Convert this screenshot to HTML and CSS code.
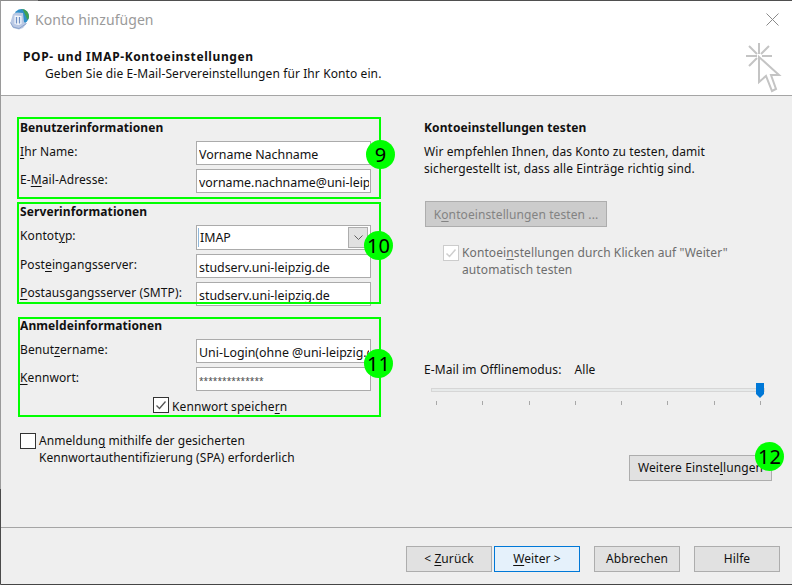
FILE: index.html
```html
<!DOCTYPE html>
<html lang="de">
<head>
<meta charset="utf-8">
<title>Konto hinzufügen</title>
<link rel="stylesheet" href="styles.css">
</head>
<body>
<div class="window">
  <header class="head">
    <div class="titlebar">
      <svg class="app-icon" width="20" height="22" viewBox="0 0 20 22">
        <circle cx="11.500" cy="8.500" r="7.500" fill="#2f8fc9"/>
        <path d="M11 1a7.500 7.500 0 0 1 8 7.500c0 1.500-.5 2.500-1.500 3.500L13 2z" fill="#3fa052"/>
        <path d="M.5 14.500L3 6l4-1.500L13 5l1 9 2.500 1.500L13 20l-4 1.500L3 20z" fill="#b9c8e4"/>
        <path d="M4.500 7.500l7 .5v8l-3 1-4-1z" fill="#f4f7fc"/>
        <path d="M6.500 9v6.500M9.500 9v6.500" stroke="#6f8fc4" stroke-width="1.300"/>
        <path d="M.5 14.500L3 19l6 1.500 7.500-5" fill="none" stroke="#8ba4cc"/>
      </svg>
      <span class="title">Konto hinzufügen</span>
      <svg class="close" width="13" height="13" viewBox="0 0 13 13">
        <path d="M.5.5l12 12M12.500.5l-12 12" stroke="#8a8a8a" fill="none"/>
      </svg>
    </div>
    <div class="head-body">
      <div class="head-text">
        <h1 class="head-title">POP- und IMAP-Kontoeinstellungen</h1>
        <p class="head-sub">Geben Sie die E-Mail-Servereinstellungen für Ihr Konto ein.</p>
      </div>
      <svg class="click-icon" width="38" height="52" viewBox="0 0 38 52">
        <g stroke="#c4c4c4" stroke-width="2" fill="none">
          <path d="M15 1v11M2 14h11M18 14h10M5 4l8 8M25 4l-8 8M5 24l8-8"/>
          <path d="M15 15V40l7-6 6 15 4-2-5-14h8z" fill="#fff"/>
        </g>
      </svg>
    </div>
  </header>

  <main class="main">
    <section class="col-left">
      <div class="group">
        <h2 class="heading">Benutzerinformationen</h2>
        <div class="rows">
          <label class="lbl"><u>I</u>hr Name:</label>
          <input class="field" value="Vorname Nachname">
          <label class="lbl">E-<u>M</u>ail-Adresse:</label>
          <input class="field" value="vorname.nachname@uni-leipzig.de">
        </div>
      </div>
      <div class="group group-server">
        <h2 class="heading">Serverinformationen</h2>
        <div class="rows">
          <label class="lbl">Kontot<u>y</u>p:</label>
          <div class="combo">
            <span class="combo-text">IMAP</span>
            <span class="combo-btn">
              <svg width="9" height="6" viewBox="0 0 9 6"><path d="M.5.500l4 4 4-4" fill="none" stroke="#606060"/></svg>
            </span>
          </div>
          <label class="lbl">Post<u>e</u>ingangsserver:</label>
          <input class="field" value="studserv.uni-leipzig.de">
          <label class="lbl"><u>P</u>ostausgangsserver (SMTP):</label>
          <input class="field" value="studserv.uni-leipzig.de">
        </div>
      </div>
      <div class="group group-login">
        <h2 class="heading">Anmeldeinformationen</h2>
        <div class="rows">
          <label class="lbl">Benut<u>z</u>ername:</label>
          <input class="field" value="Uni-Login(ohne @uni-leipzig.de)">
          <label class="lbl"><u>K</u>ennwort:</label>
          <input class="field field-pass" value="**************">
        </div>
      </div>
      <div class="check-row check-save">
        <span class="box"><svg width="14" height="14" viewBox="0 0 14 14"><path d="M2.500 7.500l3 3 6-7" fill="none" stroke="#555" stroke-width="1.300"/></svg></span>
        <span class="check-text">Kennwort speiche<u>r</u>n</span>
      </div>
      <div class="check-row check-spa">
        <span class="box"></span>
        <span class="check-text">Anmeldun<u>g</u> mithilfe der gesicherten<br>Kennwortauthentifizierung (SPA) erforderlich</span>
      </div>
    </section>

    <section class="col-right">
      <h2 class="heading">Kontoeinstellungen testen</h2>
      <p class="para">Wir empfehlen Ihnen, das Konto zu testen, damit<br>sichergestellt ist, dass alle Einträge richtig sind.</p>
      <button class="btn btn-test" type="button">K<u>o</u>ntoeinstellungen testen ...</button>
      <div class="check-row check-auto">
        <span class="box box-off"><svg width="14" height="14" viewBox="0 0 14 14"><path d="M2.500 7.500l3 3 6-7" fill="none" stroke="#cfcfcf" stroke-width="1.500"/></svg></span>
        <span>Kontoei<u>n</u>stellungen durch Klicken auf "Weiter"<br>automatisch testen</span>
      </div>
      <div class="offline">
        <span>E-Mail im Offlinemodus:</span>
        <span>Alle</span>
      </div>
      <div class="slider">
        <div class="track"></div>
        <div class="ticks"><i></i><i></i><i></i><i></i><i></i><i></i><i></i><i></i></div>
        <svg class="thumb" width="8" height="15" viewBox="0 0 8 15"><path d="M0 0h8v11l-4 4-4-4z" fill="#0078d7"/></svg>
      </div>
      <button class="btn btn-more" type="button">Weitere Einste<u>l</u>lungen</button>
    </section>
  </main>

  <footer class="foot">
    <button class="btn btn-foot" type="button">&lt; <u>Z</u>urück</button>
    <button class="btn btn-foot btn-primary" type="button"><u>W</u>eiter &gt;</button>
    <button class="btn btn-foot btn-gap" type="button">Abbrechen</button>
    <button class="btn btn-foot btn-gap" type="button">Hilfe</button>
  </footer>

  <div class="note note-1"></div>
  <div class="note note-2"></div>
  <div class="note note-3"></div>
  <div class="badge badge-9">9</div>
  <div class="badge badge-10">10</div>
  <div class="badge badge-11">11</div>
  <div class="badge badge-12">12</div>
</div>
</body>
</html>
```

FILE: styles.css
```css
* { box-sizing: border-box; }
html, body { margin: 0; padding: 0; background: #fff; overflow: hidden; }
body { font-family: "Noto Sans", "Open Sans", sans-serif; font-size: 12px; letter-spacing: 0.1px; color: #111; }
h1, h2, p { margin: 0; font-size: inherit; }
u { text-underline-offset: 2px; }

.window {
  position: relative;
  width: 792px;
  height: 585px;
  display: flex;
  flex-direction: column;
  border-left: 1px solid #9a9a9a;
  border-bottom: 1px solid #454545;
  border-top: 1px solid #8a8a8a;
}
.window::before { content: ""; position: absolute; left: -1px; top: 488px; bottom: 0; width: 1px; background: #4a4a4a; }
.window::after { content: ""; position: absolute; left: 37px; right: 0; top: -1px; height: 1px; background: #4f4f4f; }

.head { height: 95px; background: #fff; border-bottom: 1px solid #a5a5a5; display: flex; flex-direction: column; flex: none; }
.titlebar { display: flex; align-items: center; height: 36px; padding: 0 13px 0 9px; }
.app-icon { flex: none; }
.title { margin-left: 5px; font-size: 14px; letter-spacing: 0.05px; color: #9a9a9a; flex: 1; }
.head-body { display: flex; justify-content: space-between; padding: 0 13px 0 22px; }
.head-text { padding-top: 11px; }
.head-title { font-weight: 700; line-height: 17px; letter-spacing: 0.6px; }
.head-sub { margin-left: 22px; line-height: 17px; }
.click-icon { margin: 5px -3px 0 0; }

.main { flex: 1; display: grid; grid-template-columns: 423px 1fr; background: #efefef; min-height: 0; }
.col-left { padding: 23px 0 0 19px; display: flex; flex-direction: column; align-items: flex-start; }
.col-right { padding: 23px 0 0 0; display: flex; flex-direction: column; align-items: flex-start; }

.heading { font-weight: 700; line-height: 16px; height: 22px; padding-top: 1px; }
.rows { display: grid; grid-template-columns: 176px 175px; row-gap: 4px; }
.lbl { line-height: 18px; padding-top: 2px; }
.group-server { margin-top: 10px; }
.group-login { margin-top: 11px; }

.field {
  display: block;
  width: 175px;
  height: 24px;
  padding: 2px 1px 0 2px;
  border: 1px solid #ababab;
  background: #fff;
  font: inherit;
  font-size: 12.4px;
  letter-spacing: 0;
  color: #111;
  outline: none;
}
.field-pass { font-size: 8.4px; color: #444; }

.combo { width: 175px; height: 25px; border: 1px solid #ababab; background: #fff; display: flex; align-items: center; justify-content: space-between; padding: 1px 2px 1px 1px; font-size: 12.4px; letter-spacing: 0; }
.combo-text { border-left: 1px solid #8fb8dc; padding-left: 1px; line-height: 19px; }
.combo-btn { width: 20px; height: 21px; background: #e1e1e1; border: 1px solid #adadad; display: flex; align-items: center; justify-content: center; }

.check-row { display: flex; align-items: flex-start; line-height: 17px; }
.box { flex: none; width: 16px; height: 16px; border: 1px solid #333; background: #fff; margin-right: 3px; display: flex; align-items: center; justify-content: center; }
.check-save { margin: 6px 0 0 133px; }
.check-save .check-text { padding-top: 1px; }
.check-spa { margin-top: 18px; }
.check-spa .check-text { margin-top: -1px; letter-spacing: 0.06px; }
.check-auto { margin: 17px 0 0 19px; color: #6d6d6d; }
.box-off { border-color: #cccccc; margin-top: 1px; }

.para { margin-top: 2px; line-height: 17px; }

.btn { display: block; height: 26px; padding: 0; font: inherit; letter-spacing: inherit; color: #111; background: #e1e1e1; border: 1px solid #adadad; line-height: 22px; text-align: center; }
.btn-test { margin: 24px 0 0 1px; width: 182px; padding-top: 1px; background: #ccc; color: #838383; }
.offline { margin-top: 83px; line-height: 17px; display: flex; gap: 13px; color: #111; }

.slider { position: relative; width: 334px; height: 22px; margin: 5px 0 0 7px; }
.track { height: 4px; margin-top: 5px; background: #e7eaea; border: 1px solid #d6d6d6; }
.ticks { display: flex; justify-content: space-between; margin-top: 9px; padding: 0 4px 0 5px; }
.ticks i { display: block; width: 1px; height: 4px; background: #a8a8a8; }
.thumb { position: absolute; right: 1px; top: 0; }

.btn-more { width: 143px; margin: 50px 0 0 205px; }

.foot { flex: none; height: 57px; border-top: 1px solid #a5a5a5; background: #efefef; display: flex; padding: 18px 0 0 405px; gap: 2px; }
.btn-foot { width: 86px; }
.btn-primary { background: #e5f1fb; border-color: #0078d7; }
.btn-gap { margin-left: 12px; }

.note { position: absolute; border: 2px solid #00ff00; }
.note-1 { left: 16px; top: 116px; width: 364px; height: 82px; }
.note-2 { left: 16px; top: 201px; width: 364px; height: 102px; }
.note-3 { left: 17px; top: 316px; width: 363px; height: 100px; }

.badge { position: absolute; width: 29px; height: 29px; border-radius: 50%; background: #00ff00; color: #000; font-size: 20px; letter-spacing: 0; line-height: 29px; text-align: center; }
.badge-9 { left: 365px; top: 139px; }
.badge-10 { left: 363px; top: 230px; }
.badge-11 { left: 363px; top: 348px; }
.badge-12 { left: 754px; top: 441px; }
```
